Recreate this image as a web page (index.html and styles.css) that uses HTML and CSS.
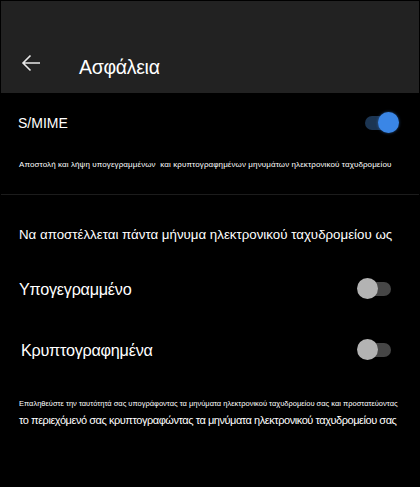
FILE: index.html
```html
<!DOCTYPE html>
<html lang="el">
<head>
<meta charset="utf-8">
<title>Ασφάλεια</title>
<link rel="stylesheet" href="styles.css">
</head>
<body>
<div class="screen">
  <header class="appbar">
    <svg class="back" width="20" height="18" viewBox="0 0 20 18" aria-hidden="true">
      <path d="M19 9H2M9.5 1.5L2 9l7.5 7.5" fill="none" stroke="#e8e8e8" stroke-width="1.6"/>
    </svg>
    <h1 class="title">Ασφάλεια</h1>
  </header>

  <section class="smime">
    <div class="row row-smime">
      <span class="label-sm">S/MIME</span>
      <span class="toggle on"><span class="track"></span><span class="knob"></span></span>
    </div>
    <p class="tiny desc">Αποστολή και λήψη υπογεγραμμένων &nbsp;και κρυπτογραφημένων μηνυμάτων ηλεκτρονικού ταχυδρομείου</p>
  </section>

  <hr class="divider">

  <section class="always">
    <p class="heading">Να αποστέλλεται πάντα μήνυμα ηλεκτρονικού ταχυδρομείου ως</p>
    <div class="row row-opt">
      <span class="label-lg">Υπογεγραμμένο</span>
      <span class="toggle"><span class="track"></span><span class="knob"></span></span>
    </div>
    <div class="row row-opt row-enc">
      <span class="label-lg">Κρυπτογραφημένα</span>
      <span class="toggle"><span class="track"></span><span class="knob"></span></span>
    </div>
    <p class="tiny note">Επαληθεύστε την ταυτότητά σας υπογράφοντας τα μηνύματα ηλεκτρονικού ταχυδρομείου σας και προστατεύοντας</p>
    <p class="note2">το περιεχόμενό σας κρυπτογραφώντας τα μηνύματα ηλεκτρονικού ταχυδρομείου σας</p>
  </section>
</div>
</body>
</html>
```

FILE: styles.css
```css
* { box-sizing: border-box; }

html, body {
  margin: 0;
  background: #000;
}

body {
  font-family: "Liberation Sans", Arial, sans-serif;
  color: #fff;
}

.screen {
  width: 420px;
  height: 487px;
  padding: 1px;
  overflow: hidden;
}

/* top bar */
.appbar {
  height: 92px;
  background: #222;
  display: flex;
  align-items: center;
  padding: 52px 0 12px 20px;
}

.back {
  display: block;
  margin-bottom: 8px;
  flex: none;
}

.title {
  margin: 0 0 0 38px;
  font-size: 19.5px;
  letter-spacing: -0.3px;
  font-weight: normal;
  line-height: 28px;
  color: #fff;
}

/* rows */
.row {
  display: flex;
  align-items: center;
  justify-content: space-between;
}

.smime {
  padding: 18px 20px 0 17px;
}

.row-smime {
  height: 24px;
}

.label-sm {
  font-size: 14px;
  line-height: 24px;
}

.tiny {
  margin: 0;
  font-size: 8px;
  line-height: 10px;
  white-space: nowrap;
}

.desc {
  margin-top: 25px;
  padding-left: 1px;
  letter-spacing: 0.1px;
}

.divider {
  margin: 24px 0 0;
  border: 0;
  height: 1px;
  background: #1c1c1c;
}

.always {
  padding: 0 28px 0 18px;
}

.heading {
  margin: 31px 0 0;
  font-size: 13.3px;
  line-height: 18px;
  white-space: nowrap;
}

.row-opt {
  height: 28px;
  margin-top: 31px;
}

.row-enc {
  margin-top: 33px;
  padding-left: 2px;
}

.label-lg {
  font-size: 16.2px;
  letter-spacing: -0.25px;
  line-height: 28px;
}

.note {
  margin-top: 35px;
  font-size: 7.5px;
}

.note2 {
  margin: 3px 0 0;
  font-size: 11px;
  letter-spacing: -0.45px;
  line-height: 16px;
  white-space: nowrap;
}

/* switches */
.toggle {
  position: relative;
  width: 34px;
  height: 22px;
  flex: none;
}

.toggle .track {
  position: absolute;
  top: 4px;
  right: 0;
  width: 28px;
  height: 14px;
  border-radius: 7px;
  background: #464646;
}

.toggle .knob {
  position: absolute;
  top: 0;
  left: 0;
  width: 21px;
  height: 21px;
  border-radius: 50%;
  background: #b3b3b3;
}

.toggle.on .track {
  left: 0;
  right: auto;
  background: #1c3552;
}

.toggle.on .knob {
  left: auto;
  right: 0;
  background: #3a86e6;
  box-shadow: 0 0 3px rgba(58, 134, 230, 0.6);
}
```
